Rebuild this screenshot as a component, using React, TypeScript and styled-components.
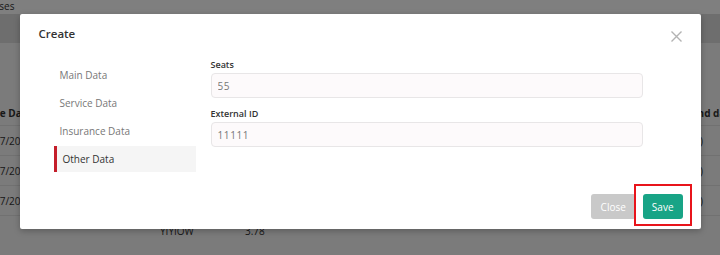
import React, { useState } from "react";
import styled, { createGlobalStyle } from "styled-components";

const GlobalStyle = createGlobalStyle`
  html, body { margin: 0; padding: 0; }
  body { font-family: "Open Sans", "Liberation Sans", sans-serif; }
  * { box-sizing: border-box; }
`;

const Page = styled.div`
  position: relative;
  width: 720px;
  height: 255px;
  overflow: hidden;
  background: #f6f6f6;
  color: #333;
`;

const TopStrip = styled.div`
  height: 14px;
  background: #ffffff;
  font-size: 10px;
  line-height: 12px;
  overflow: hidden;
  white-space: nowrap;
`;

const CutText = styled.span<{ $shift: number }>`
  display: inline-block;
  margin-left: ${(p) => -p.$shift}px;
`;

const Band = styled.div`
  height: 29px;
  background: #dcdcdc;
`;

const Spacer = styled.div<{ $h: number }>`
  height: ${(p) => p.$h}px;
`;

const Table = styled.div`
  margin-left: -46px;
  display: grid;
  grid-template-columns: 80px 126px 85px 460px 80px;
  font-size: 10px;
  white-space: nowrap;
`;

const Cell = styled.div<{ $head?: boolean; $right?: boolean; $h: number; $line?: boolean }>`
  height: ${(p) => p.$h}px;
  display: flex;
  align-items: center;
  justify-content: ${(p) => (p.$right ? "flex-end" : "flex-start")};
  padding-right: ${(p) => (p.$right ? "2px" : "0")};
  font-weight: ${(p) => (p.$head ? 700 : 400)};
  border-top: ${(p) => (p.$line ? "1px solid #e2e2e2" : "none")};
  color: #333;
`;

const Overlay = styled.div`
  position: absolute;
  inset: 0;
  background: rgba(0, 0, 0, 0.5);
  display: flex;
  justify-content: center;
  align-items: flex-start;
  padding-top: 14px;
`;

const Modal = styled.div`
  width: 681px;
  height: 215px;
  background: #ffffff;
  border-radius: 2px;
  box-shadow: 0 2px 6px rgba(0, 0, 0, 0.25);
  display: flex;
  flex-direction: column;
`;

const Header = styled.div`
  height: 40px;
  display: flex;
  align-items: center;
  justify-content: space-between;
  padding: 0 19px;
`;

const Title = styled.div`
  font-size: 11.5px;
  font-weight: 600;
  color: #333;
  margin-top: -1px;
`;

const CloseX = styled.button`
  border: none;
  background: transparent;
  padding: 0;
  width: 11px;
  height: 11px;
  margin-top: 4px;
  display: flex;
  cursor: pointer;
`;

const Body = styled.div`
  display: grid;
  grid-template-columns: 142px 432px;
  column-gap: 15px;
  padding-left: 34px;
`;

const Nav = styled.nav`
  display: flex;
  flex-direction: column;
  gap: 2px;
  padding-top: 8px;
`;

const NavItem = styled.div<{ $active?: boolean }>`
  height: 26px;
  display: flex;
  align-items: center;
  padding-left: 6px;
  font-size: 10px;
  color: ${(p) => (p.$active ? "#333" : "#777")};
  background: ${(p) => (p.$active ? "#f5f5f5" : "transparent")};
  border-left: ${(p) => (p.$active ? "3px solid #c41e2a" : "none")};
  cursor: pointer;
`;

const Form = styled.div`
  display: flex;
  flex-direction: column;
  gap: 9px;
  padding-top: 4px;
`;

const Field = styled.div`
  display: flex;
  flex-direction: column;
  gap: 1px;
`;

const Label = styled.label`
  font-size: 9px;
  line-height: 14px;
  font-weight: 600;
  color: #333;
`;

const Input = styled.input`
  height: 25px;
  width: 100%;
  border: 1px solid #e8e6e7;
  border-radius: 4px;
  background: #fdfafb;
  padding: 0 6px;
  font-family: "Open Sans", "Liberation Sans", sans-serif;
  font-size: 10px;
  letter-spacing: 0.6px;
  color: #777;
  outline: none;
`;

const Footer = styled.div`
  margin-top: auto;
  display: flex;
  justify-content: flex-end;
  gap: 7px;
  padding: 0 18px 10px 0;
`;

const Btn = styled.button<{ $variant: "muted" | "primary" }>`
  position: relative;
  height: 25px;
  padding: 0 ${(p) => (p.$variant === "primary" ? 9 : 10)}px;
  border: none;
  border-radius: 3px;
  font-family: "Open Sans", "Liberation Sans", sans-serif;
  font-size: 10px;
  color: #fff;
  background: ${(p) => (p.$variant === "primary" ? "#18a486" : "#c9c9c9")};
  cursor: pointer;
`;

const Highlight = styled.span`
  position: absolute;
  left: -9px;
  right: -9px;
  top: -10px;
  bottom: -7px;
  border: 2px solid #e8141b;
  pointer-events: none;
`;

const navItems = ["Main Data", "Service Data", "Insurance Data", "Other Data"];

export default function App() {
  const [active, setActive] = useState(3);
  const rows = [
    ["07/2023", "", "", "12 (0)", ""],
    ["07/2023", "", "", "12 (0)", ""],
    ["07/2023", "", "", "12 (0)", ""],
    ["", "", "YIYIOW", "3.78", ""],
  ];
  return (
    <>
      <GlobalStyle />
      <Page>
        <TopStrip>
          <CutText $shift={25}>Licenses</CutText>
        </TopStrip>
        <Band />
        <Spacer $h={57} />
        <Table>
          <Cell $head $right $h={25}>Service Date</Cell>
          <Cell $h={25} />
          <Cell $h={25} />
          <Cell $h={25} />
          <Cell $head $h={25}>
            <CutText $shift={13}>End date</CutText>
          </Cell>
          {rows.map((r, i) =>
            r.map((c, j) => (
              <Cell key={`${i}-${j}`} $h={30} $line $right={j === 0 || (j === 3 && i < 3)}>
                {c}
              </Cell>
            ))
          )}
        </Table>
        <Overlay>
          <Modal>
            <Header>
              <Title>Create</Title>
              <CloseX aria-label="close">
                <svg width="11" height="11" viewBox="0 0 11 11">
                  <path d="M0.5 0.5 L10.5 10.5 M10.5 0.5 L0.5 10.5" stroke="#b3b3b3" strokeWidth="1.4" fill="none" />
                </svg>
              </CloseX>
            </Header>
            <Body>
              <Nav>
                {navItems.map((n, i) => (
                  <NavItem key={n} $active={i === active} onClick={() => setActive(i)}>
                    {n}
                  </NavItem>
                ))}
              </Nav>
              <Form>
                <Field>
                  <Label>Seats</Label>
                  <Input defaultValue="55" />
                </Field>
                <Field>
                  <Label>External ID</Label>
                  <Input defaultValue="11111" />
                </Field>
              </Form>
            </Body>
            <Footer>
              <Btn $variant="muted">Close</Btn>
              <Btn $variant="primary">
                Save
                <Highlight />
              </Btn>
            </Footer>
          </Modal>
        </Overlay>
      </Page>
    </>
  );
}
